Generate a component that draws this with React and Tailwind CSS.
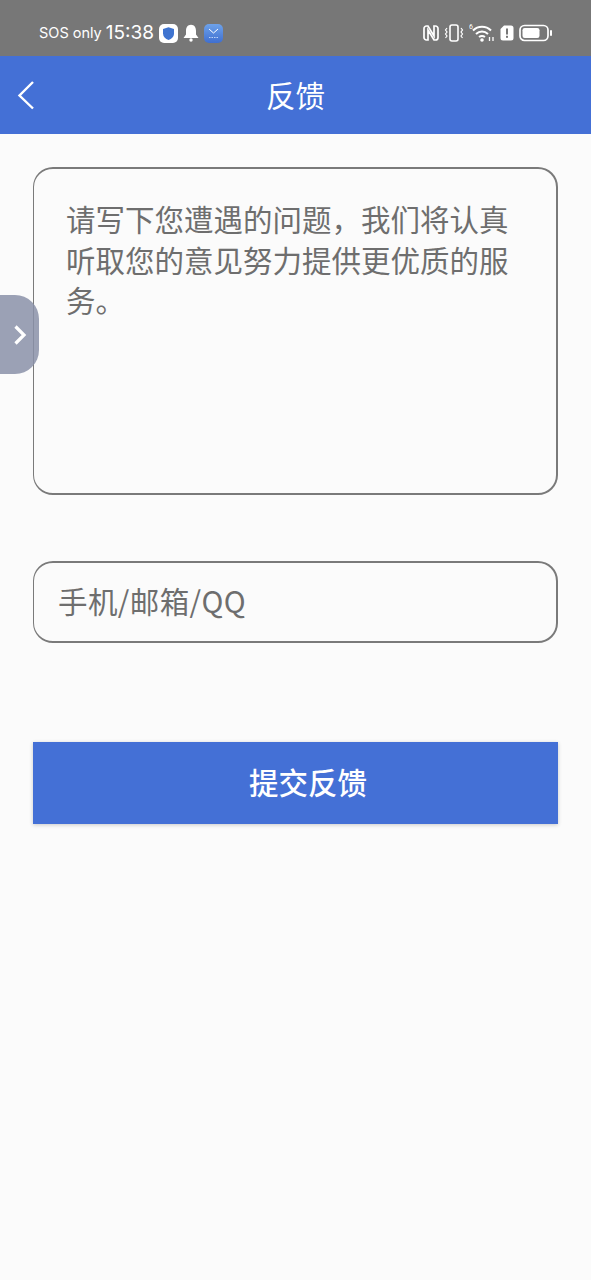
import React from "react";

const STATUS = "font-['Inter','Noto_Sans_CJK_SC',sans-serif]";
const CJK = "font-['Noto_Sans_CJK_SC','Noto_Sans',sans-serif]";

function Shield() {
  return (
    <svg width="19" height="19" viewBox="0 0 19 19">
      <rect width="19" height="19" rx="5" fill="#fff" />
      <path d="M9.5 3.2 L15 5 V9.5 C15 12.8 12.6 14.9 9.5 16 C6.4 14.9 4 12.8 4 9.5 V5 Z" fill="#3f74d0" />
    </svg>
  );
}
function Bell() {
  return (
    <svg width="16" height="18" viewBox="0 0 16 18">
      <path d="M8 0.8 C11.4 0.8 13 3.6 13 7 V10.5 L15.5 14 H0.5 L3 10.5 V7 C3 3.6 4.6 0.8 8 0.8 Z" fill="#fff" />
      <circle cx="8" cy="16" r="1.7" fill="#fff" />
    </svg>
  );
}
function MailApp() {
  return (
    <svg width="19" height="19" viewBox="0 0 19 19">
      <defs>
        <linearGradient id="m" x1="0" y1="0" x2="0" y2="1">
          <stop offset="0" stopColor="#6ea2ea" />
          <stop offset="1" stopColor="#3f6fd0" />
        </linearGradient>
      </defs>
      <rect width="19" height="19" rx="5" fill="url(#m)" />
      <path d="M5 5 L9.5 9 L14 5" stroke="#fff" strokeWidth="1" fill="none" />
      <path d="M5 13.5 H14" stroke="#dbe8ff" strokeWidth="0.8" strokeDasharray="1.5 1" fill="none" />
    </svg>
  );
}
function Nfc() {
  return (
    <svg width="16" height="16" viewBox="0 0 16 16" fill="none">
      <path d="M4.5 1 H3.5 A2.5 2.5 0 0 0 1 3.5 V12.5 A2.5 2.5 0 0 0 3.5 15 H5 V5 L11 15 H12.5 A2.5 2.5 0 0 0 15 12.5 V3.5 A2.5 2.5 0 0 0 12.5 1 H11 V11 L5 1 Z" stroke="#fff" strokeWidth="1.7" />
    </svg>
  );
}
function Vibrate() {
  return (
    <svg width="20" height="18" viewBox="0 0 20 18" fill="none" stroke="#fff">
      <rect x="6" y="1" width="8" height="16" rx="2" strokeWidth="1.6" />
      <path d="M3 4 L1.5 6 L3 8 L1.5 10 L3 12 L1.5 14" strokeWidth="1.2" />
      <path d="M17 4 L18.5 6 L17 8 L18.5 10 L17 12 L18.5 14" strokeWidth="1.2" />
    </svg>
  );
}
function Wifi() {
  return (
    <svg width="26" height="20" viewBox="0 0 26 20" fill="none" stroke="#fff">
      <text x="0" y="6" fontSize="7" fill="#fff" stroke="none" fontFamily="Roboto, sans-serif">6</text>
      <path d="M4 7.5 C9 2.5 17 2.5 22 7.5" strokeWidth="2" />
      <path d="M7 11 C10.5 7.8 15.5 7.8 19 11" strokeWidth="2" />
      <path d="M10 14 C12 12.6 14 12.6 16 14" strokeWidth="2" />
      <circle cx="13" cy="17" r="1.8" fill="#fff" stroke="none" />
      <path d="M20.5 14 V18 M24 14 V18" strokeWidth="1.3" />
    </svg>
  );
}
function Sim() {
  return (
    <svg width="14" height="16" viewBox="0 0 14 16">
      <path d="M4 0.5 H11 A2.5 2.5 0 0 1 13.5 3 V13 A2.5 2.5 0 0 1 11 15.5 H3 A2.5 2.5 0 0 1 0.5 13 V4 Z" fill="#fff" />
      <rect x="6" y="3.5" width="2" height="6" fill="#777" />
      <rect x="6" y="10.8" width="2" height="2" fill="#777" />
    </svg>
  );
}
function Battery() {
  return (
    <svg width="34" height="18" viewBox="0 0 34 18" fill="none">
      <rect x="1" y="1.5" width="28" height="15" rx="4.5" stroke="#fff" strokeWidth="1.7" />
      <rect x="3.5" y="4" width="17" height="10" rx="2.2" fill="#fff" />
      <rect x="31" y="6" width="2" height="6" rx="1" fill="#fff" />
    </svg>
  );
}

export default function App() {
  return (
    <div className={`relative h-[1280px] w-[591px] overflow-hidden bg-[#fbfbfb] ${CJK}`}>
      <div className={`flex h-[56px] items-center justify-between bg-[#777777] pl-[39px] pr-[38px] pt-[10px] text-white ${STATUS}`}>
        <div className="flex items-center">
          <span className="mr-[4px] text-[14.5px]">SOS only</span>
          <span className="mr-[5px] text-[19px]">15:38</span>
          <span className="flex items-center gap-[5px]">
            <Shield />
            <Bell />
            <MailApp />
          </span>
        </div>
        <div className="flex items-center gap-[5px]">
          <Nfc />
          <Vibrate />
          <Wifi />
          <Sim />
          <Battery />
        </div>
      </div>

      <div className="relative flex h-[78px] items-center justify-center bg-[#4470d6] pb-[2px] text-[29.5px] text-white">
        <svg className="absolute left-[17px] top-[24px]" width="18" height="30" viewBox="0 0 18 30" fill="none">
          <path d="M16 2 L2.5 15.5 L16 28.5" stroke="#fff" strokeWidth="2.4" />
        </svg>
        反馈
      </div>

      <div className="flex flex-col px-[33px] pt-[33px]">
        <div className="h-[328px] w-[525px] rounded-[20px] border-2 border-l-1 border-[#7a7a7a] pl-[32px] pr-[32px] pt-[29px] text-[29.5px] leading-[40.5px] text-[#6e6e6e]">
          请写下您遭遇的问题，我们将认真听取您的意见努力提供更优质的服务。
        </div>
        <div className="mt-[66px] flex h-[82px] w-[525px] items-center rounded-[20px] border-2 border-l-1 border-[#7a7a7a] pb-[3px] pl-[24px] text-[29.5px] tracking-[0.4px] text-[#6e6e6e]">
          手机/邮箱/QQ
        </div>
        <div className="mt-[99px] flex h-[82px] w-[525px] items-center justify-center bg-[#4470d6] pb-[3px] pl-[25px] text-[29.5px] font-medium text-white shadow-[0_1px_4px_rgba(0,0,0,0.2)]">
          提交反馈
        </div>
      </div>

      <div className="absolute left-0 top-[295px] flex h-[79px] w-[39px] items-center justify-center rounded-r-[24px] bg-[#8a90a8]/85">
        <svg width="14" height="22" viewBox="0 0 14 22" fill="none">
          <path d="M2.5 2.5 L11 11 L2.5 19.5" stroke="#fff" strokeWidth="3.2" />
        </svg>
      </div>
    </div>
  );
}
